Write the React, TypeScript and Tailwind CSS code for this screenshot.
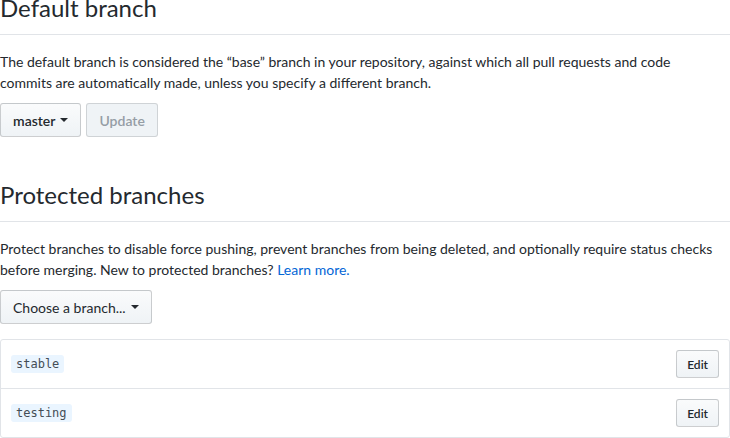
import React from "react";

const font = { fontFamily: 'Lato, "Liberation Sans", sans-serif' };

function Caret() {
  return (
    <span className="ml-[5px] inline-block h-0 w-0 border-x-4 border-t-4 border-x-transparent border-t-current align-middle" />
  );
}

function Subhead({ title, className = "" }: { title: string; className?: string }) {
  return (
    <div className={`border-b border-[#e1e4e8] pb-2 mb-4 ${className}`}>
      <h2 className="text-[24px] leading-[36px] font-normal text-[#24292e]">{title}</h2>
    </div>
  );
}

function BranchRow({ name, last }: { name: string; last?: boolean }) {
  return (
    <div className={`flex items-center justify-between p-[10px] ${last ? "" : "border-b border-[#e1e4e8]"}`}>
      <code className="rounded-[3px] bg-[#eaf5ff] px-[5px] py-[1px] text-[12px] leading-[16px] text-[#444d56] [font-family:'DejaVu_Sans_Mono',monospace]">
        {name}
      </code>
      <button className="h-[28px] rounded-[3px] border border-[#1b1f2333] bg-gradient-to-b from-[#fafbfc] to-[#eff3f6] px-[10px] text-[12px] font-semibold text-[#24292e]">
        Edit
      </button>
    </div>
  );
}

export default function App() {
  return (
    <div className="h-[438px] w-[730px] overflow-hidden bg-white text-[14px] leading-[21px] text-[#24292e]" style={font}>
      <Subhead title="Default branch" className="-mt-[10px]" />
      <p className="mb-[10px]">
        The default branch is considered the “base” branch in your repository, against which all pull requests and code
        <br />
        commits are automatically made, unless you specify a different branch.
      </p>
      <div className="flex gap-[5px]">
        <button className="flex h-[34px] items-center rounded-[3px] border border-[#1b1f2333] bg-gradient-to-b from-[#fafbfc] to-[#eff3f6] px-[12px] font-semibold text-[#24292e]">
          master
          <Caret />
        </button>
        <button className="h-[34px] rounded-[3px] border border-[#1b1f2326] bg-[#eff3f6] px-[12px] font-semibold text-[#959da5]">
          Update
        </button>
      </div>

      <Subhead title="Protected branches" className="mt-[40px]" />
      <p className="mb-[10px]">
        Protect branches to disable force pushing, prevent branches from being deleted, and optionally require status checks
        before merging. New to protected branches? <a className="text-[#0366d6]" href="#">Learn more.</a>
      </p>
      <button className="flex h-[34px] items-center rounded-[3px] border border-[#1b1f2333] bg-gradient-to-b from-[#fafbfc] to-[#eff3f6] px-[12px] text-[#24292e]">
        Choose a branch...
        <Caret />
      </button>

      <div className="mt-[15px] rounded-[3px] border border-[#e1e4e8]">
        <BranchRow name="stable" />
        <BranchRow name="testing" last />
      </div>
    </div>
  );
}
